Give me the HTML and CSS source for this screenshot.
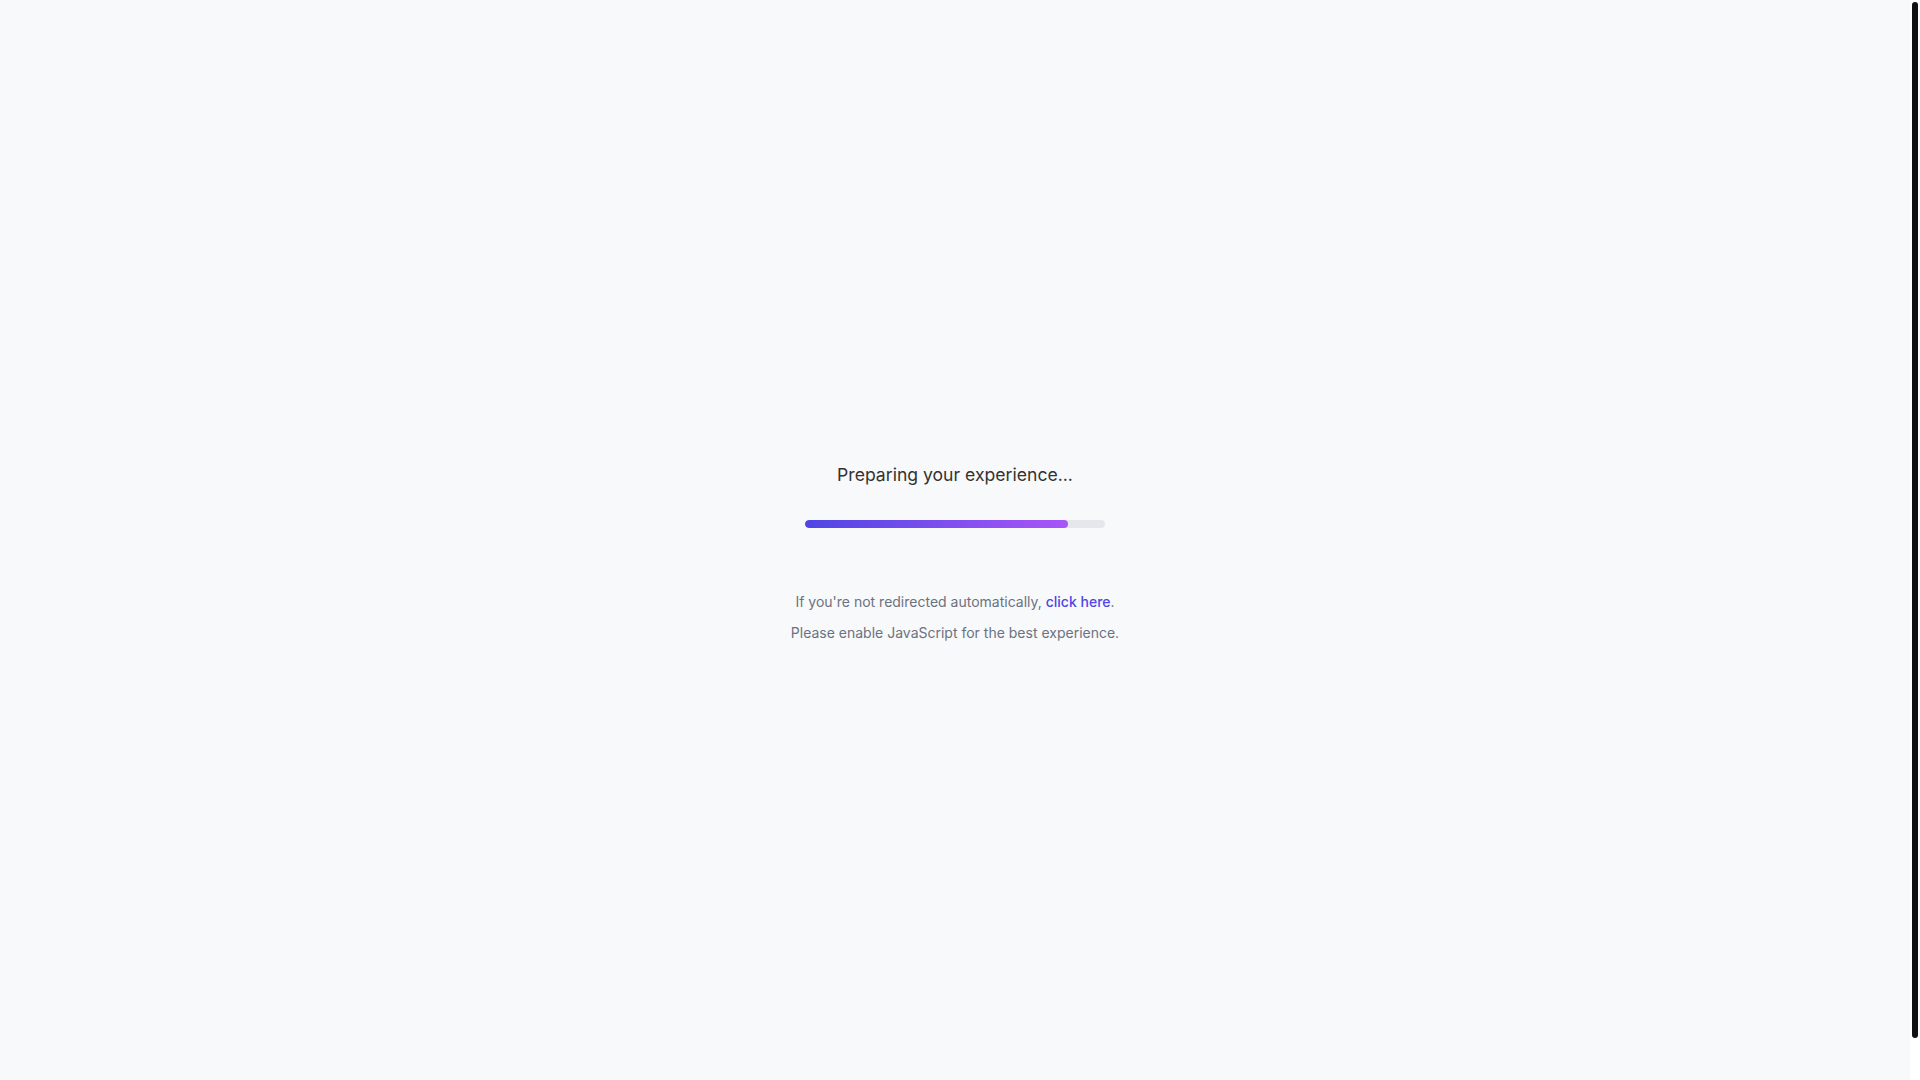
FILE: index.html
```html
<!DOCTYPE html>
<html lang="en">
<head>
<meta charset="utf-8">
<title>Redirecting…</title>
<link rel="stylesheet" href="styles.css">
</head>
<body>
<div class="viewport">
  <main class="page">
    <section class="loader">
      <h1 class="loader-title">Preparing your experience...</h1>
      <div class="progress"><div class="progress-fill" style="width: 87.5%"></div></div>
      <p class="note">If you're not redirected automatically, <a class="note-link" href="#">click here</a>.</p>
      <p class="note">Please enable JavaScript for the best experience.</p>
    </section>
  </main>
  <div class="scrollbar" aria-hidden="true"><div class="scrollbar-thumb"></div></div>
</div>
</body>
</html>
```

FILE: styles.css
```css
html, body {
  margin: 0;
  background: #f8f9fb;
  overflow: hidden;
}
body {
  font-family: Inter, "Liberation Sans", sans-serif;
}
.viewport {
  display: flex;
  height: 100vh;
}
.page {
  flex: 1;
  box-sizing: border-box;
  padding-top: 461px;
  display: flex;
  flex-direction: column;
  align-items: center;
}
.loader {
  display: flex;
  flex-direction: column;
  align-items: center;
}
.loader-title {
  margin: 0 0 31px;
  font-size: 17.6px;
  line-height: 28px;
  font-weight: 400;
  color: #333333;
}
.progress {
  width: 300px;
  height: 8px;
  border-radius: 4px;
  background: #e5e7eb;
  overflow: hidden;
  margin-bottom: 63.5px;
}
.progress-fill {
  height: 100%;
  border-radius: 4px;
  background: linear-gradient(90deg, #4f46e5, #a855f7);
}
.note {
  margin: 0 0 11px;
  font-size: 14px;
  line-height: 20px;
  color: #6b7280;
}
.note-link {
  color: #4f46e5;
  font-weight: 500;
  text-decoration: none;
}
.scrollbar {
  width: 10px;
  flex: none;
  background: #ffffff;
  box-sizing: border-box;
  padding: 2px 2px 0;
}
.scrollbar-thumb {
  height: 1036px;
  background: #111111;
  border-radius: 3px;
}
```
